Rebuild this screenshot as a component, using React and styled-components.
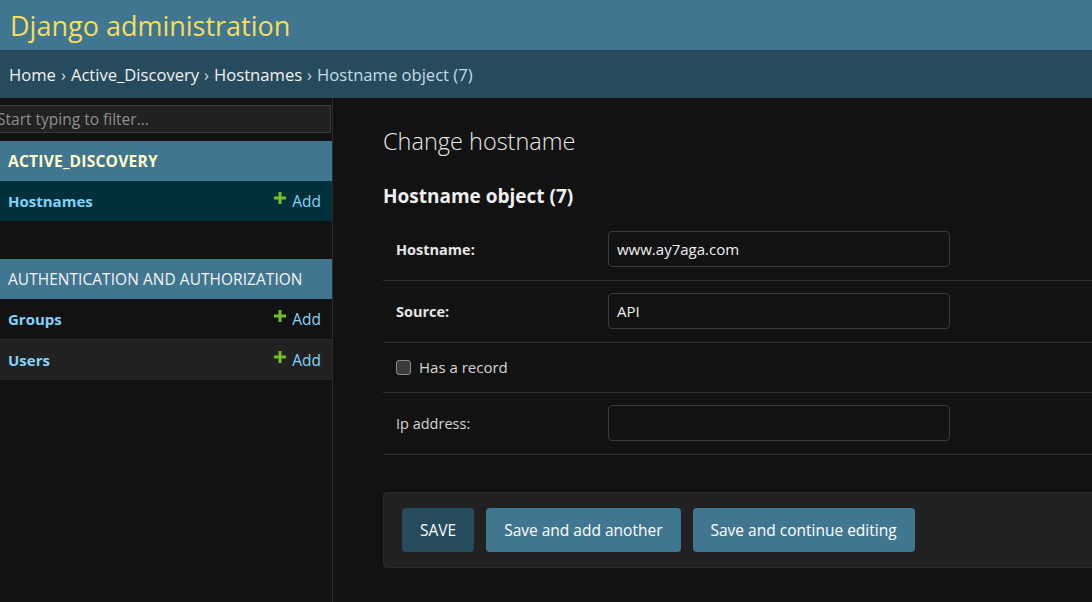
import { createGlobalStyle, styled } from "styled-components";

const GlobalStyle = createGlobalStyle`
  html, body {
    margin: 0;
    padding: 0;
    background: #121212;
  }
  body {
    font-family: "Open Sans", "Noto Sans", sans-serif;
    color: #eeeeee;
    height: 602px;
    overflow: hidden;
  }
  * { box-sizing: border-box; }
`;

const Header = styled.header`
  height: 50px;
  background: #417690;
  display: flex;
  align-items: center;
  padding: 0 10px;
`;

const Branding = styled.h1`
  margin: 0;
  font-size: 27px;
  font-weight: 400;
  color: #f5dd5d;
`;

const Breadcrumbs = styled.nav`
  height: 48px;
  background: #264b5d;
  display: flex;
  align-items: center;
  padding: 0 9px;
  font-size: 16.6px;
  color: #c4dce8;
  white-space: nowrap;
`;

const Crumb = styled.a`
  color: #f2f2f2;
  text-decoration: none;
`;

const Sep = styled.span`
  margin: 0 5px;
  color: #c4dce8;
`;

const Main = styled.div`
  display: flex;
  height: 504px;
`;

const Sidebar = styled.aside`
  width: 333px;
  flex-shrink: 0;
  border-right: 1px solid #2b2b2b;
  padding-top: 7px;
  overflow: hidden;
`;

const Filter = styled.input`
  display: block;
  width: 345px;
  height: 28px;
  margin: 0 0 8px -14px;
  padding: 0 10px;
  background: #212121;
  border: 1px solid #3a3a3a;
  color: #eee;
  font-family: inherit;
  font-size: 15.5px;
  &::placeholder { color: #8e8e8e; }
`;

const Module = styled.div`
  margin-bottom: 38px;
`;

const Caption = styled.div`
  height: 40px;
  display: flex;
  align-items: center;
  padding-left: 8px;
  background: #417690;
  font-size: ${(p) => (p.$current ? "15.6px" : "15.4px")};
  font-weight: ${(p) => (p.$current ? 700 : 400)};
  color: ${(p) => (p.$current ? "#ffffcc" : "#f4f4f4")};
  letter-spacing: ${(p) => (p.$current ? "0.2px" : "0.1px")};
`;

const ModelRow = styled.div`
  height: ${(p) => p.$h || 41}px;
  display: flex;
  align-items: center;
  justify-content: space-between;
  padding: 0 11px 0 8px;
  background: ${(p) => p.$bg};
  border-bottom: ${(p) => (p.$line ? "1px solid #2a2a2a" : "none")};
`;

const ModelName = styled.a`
  color: #81d4fa;
  font-weight: 700;
  font-size: 15px;
  text-decoration: none;
`;

const AddLink = styled.a`
  display: flex;
  align-items: center;
  gap: 6px;
  color: #81d4fa;
  font-size: 15.5px;
  text-decoration: none;
`;

const PlusIcon = styled.svg`
  width: 12px;
  height: 12px;
  margin-top: -6px;
`;

const Content = styled.main`
  flex: 1;
  padding: 27px 0 0 50px;
  overflow: hidden;
`;

const Title = styled.h1`
  margin: 0 0 26px;
  font-size: 23.5px;
  font-weight: 300;
  color: #e8e8e8;
`;

const Subtitle = styled.h2`
  margin: 0 0 10px;
  font-size: 19px;
  font-weight: 700;
  color: #f0f0f0;
`;

const Fieldset = styled.div`
  width: 760px;
`;

const FormRow = styled.div`
  display: flex;
  align-items: center;
  padding: 12px 13px 13px;
  border-bottom: 1px solid #2f2f2f;
`;

const Label = styled.label`
  width: 212px;
  flex-shrink: 0;
  font-size: 14.5px;
  font-weight: ${(p) => (p.$required ? 700 : 400)};
  color: ${(p) => (p.$required ? "#e6e6e6" : "#d6d6d6")};
`;

const TextInput = styled.input`
  width: 342px;
  height: 36px;
  padding: 0 8px;
  background: #121212;
  border: 1px solid #3a3a3a;
  border-radius: 4px;
  color: #f0f0f0;
  font-family: inherit;
  font-size: 15px;
`;

const CheckLabel = styled.label`
  display: flex;
  align-items: center;
  gap: 8px;
  height: 24px;
  font-size: 15px;
  color: #d6d6d6;
`;

const CheckBox = styled.span`
  width: 15px;
  height: 15px;
  border: 1px solid #8a8a8a;
  border-radius: 3px;
  background: #3b3b3b;
`;

const SubmitRow = styled.div`
  margin-top: 37px;
  width: 760px;
  display: flex;
  gap: 12px;
  padding: 15px 18px;
  background: #212121;
  border: 1px solid #2a2a2a;
  border-radius: 4px;
`;

const Button = styled.button`
  height: 44px;
  padding: 0 18px;
  border: none;
  border-radius: 4px;
  background: ${(p) => (p.$primary ? "#264b5d" : "#417690")};
  color: #fff;
  font-family: inherit;
  font-size: 15.5px;
`;

const Plus = () => (
  <PlusIcon viewBox="0 0 12 12">
    <path d="M4.5 0h3v4.5H12v3H7.5V12h-3V7.5H0v-3h4.5z" fill="#70bf2b" />
  </PlusIcon>
);

const App = () => {
  return (
    <>
      <GlobalStyle />
      <Header>
        <Branding>Django administration</Branding>
      </Header>
      <Breadcrumbs>
        <Crumb>Home</Crumb>
        <Sep>›</Sep>
        <Crumb>Active_Discovery</Crumb>
        <Sep>›</Sep>
        <Crumb>Hostnames</Crumb>
        <Sep>›</Sep>
        Hostname object (7)
      </Breadcrumbs>
      <Main>
        <Sidebar>
          <Filter placeholder="Start typing to filter..." />
          <Module>
            <Caption $current>ACTIVE_DISCOVERY</Caption>
            <ModelRow $bg="#00303a" $h={40}>
              <ModelName>Hostnames</ModelName>
              <AddLink>
                <Plus />
                Add
              </AddLink>
            </ModelRow>
          </Module>
          <Module>
            <Caption>AUTHENTICATION AND AUTHORIZATION</Caption>
            <ModelRow $bg="#121212" $line>
              <ModelName>Groups</ModelName>
              <AddLink>
                <Plus />
                Add
              </AddLink>
            </ModelRow>
            <ModelRow $bg="#212121" $h={40}>
              <ModelName>Users</ModelName>
              <AddLink>
                <Plus />
                Add
              </AddLink>
            </ModelRow>
          </Module>
        </Sidebar>
        <Content>
          <Title>Change hostname</Title>
          <Subtitle>Hostname object (7)</Subtitle>
          <Fieldset>
            <FormRow>
              <Label $required>Hostname:</Label>
              <TextInput defaultValue="www.ay7aga.com" />
            </FormRow>
            <FormRow>
              <Label $required>Source:</Label>
              <TextInput defaultValue="API" />
            </FormRow>
            <FormRow>
              <CheckLabel>
                <CheckBox />
                Has a record
              </CheckLabel>
            </FormRow>
            <FormRow>
              <Label>Ip address:</Label>
              <TextInput />
            </FormRow>
          </Fieldset>
          <SubmitRow>
            <Button $primary>SAVE</Button>
            <Button>Save and add another</Button>
            <Button>Save and continue editing</Button>
          </SubmitRow>
        </Content>
      </Main>
    </>
  );
};

export default App;
